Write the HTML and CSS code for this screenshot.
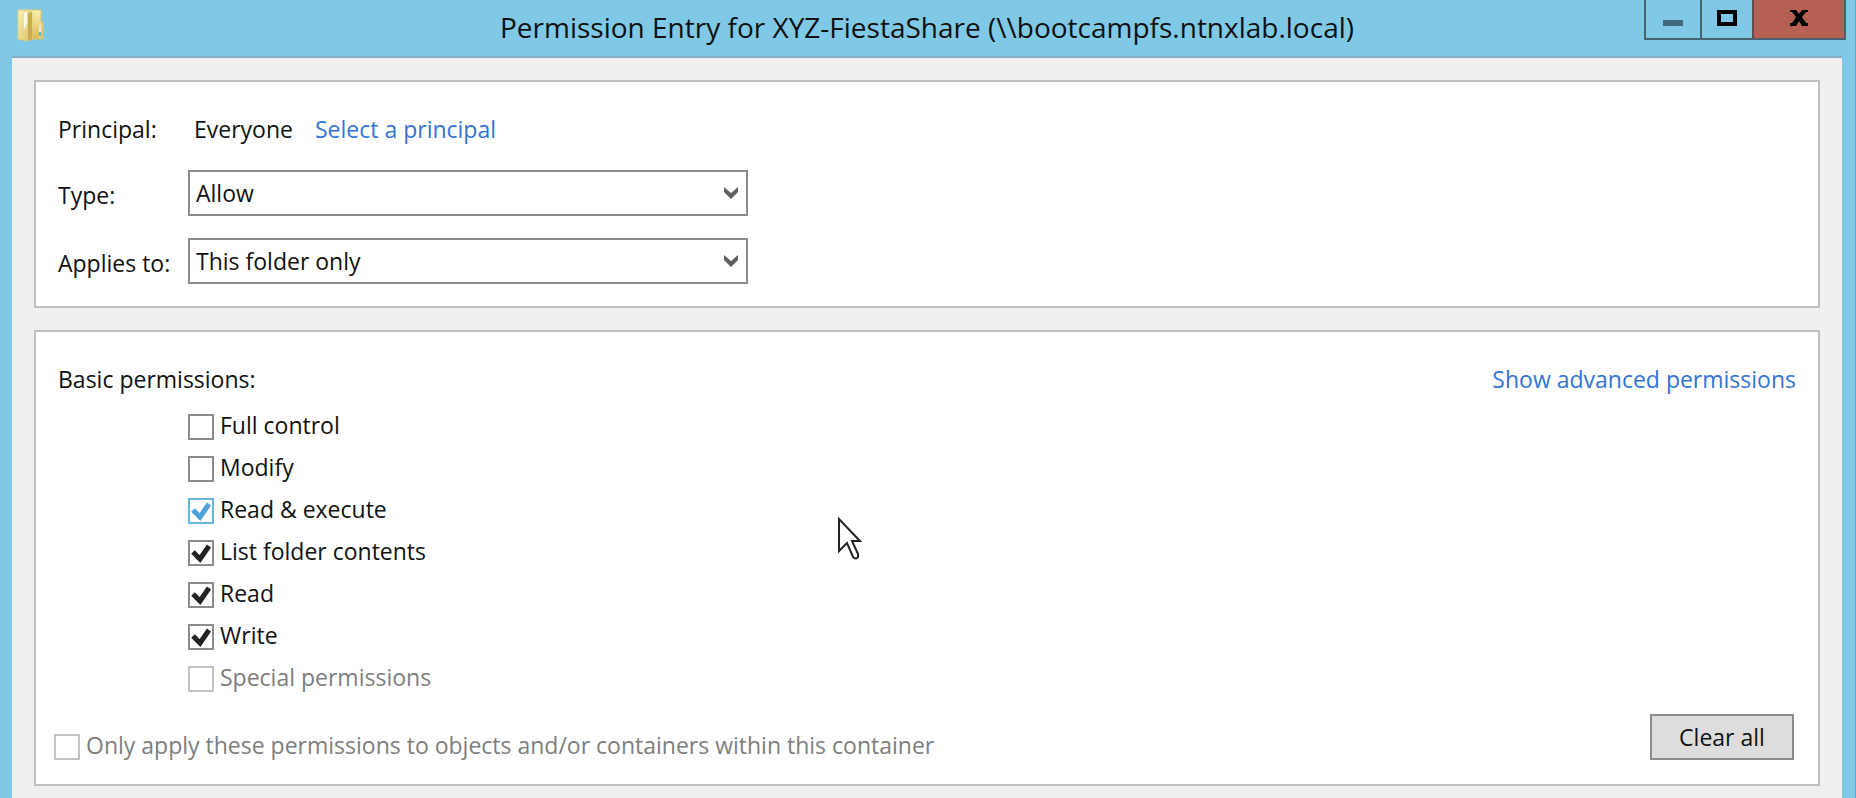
FILE: index.html
```html
<!DOCTYPE html>
<html lang="en">
<head>
<meta charset="utf-8">
<title>Permission Entry for XYZ-FiestaShare</title>
<link rel="stylesheet" href="styles.css">
</head>
<body>
<div class="window">
  <header class="titlebar">
    <svg class="folder" width="28" height="34" viewBox="0 0 28 34" aria-hidden="true">
      <defs>
        <linearGradient id="front" x1="0" y1="0" x2="1" y2="1"><stop offset="0" stop-color="#f9f1b4"/><stop offset="1" stop-color="#dcc266"/></linearGradient>
        <linearGradient id="back" x1="0" y1="0" x2="0" y2="1"><stop offset="0" stop-color="#faf0b0"/><stop offset="1" stop-color="#d9b951"/></linearGradient>
      </defs>
      <path d="M9 1h15v12l2 1v16H9z" fill="url(#back)" stroke="#dcc670"/>
      <path d="M1 1h9l5 2v27l-4 2-10-2z" fill="url(#front)" stroke="#e3d07e"/>
      <path d="M11 4l4-1v27l-4 2z" fill="#c9ab50"/>
      <path d="M7 4l3-1v11l-3 7z" fill="#fffbe6"/>
      <path d="M22 18q1-4 2 0v10h-2z" fill="#e9e9dc"/>
      <path d="M22 23h2v4h-2z" fill="#62b3c8"/>
    </svg>
    <h1 class="title">Permission Entry for XYZ-FiestaShare (\\bootcampfs.ntnxlab.local)</h1>
    <div class="controls">
      <button class="control minimize" type="button" aria-label="Minimize"><svg width="20" height="16" viewBox="0 0 20 16"><path d="M0 10h20v6H0z" fill="#40687a"/></svg></button>
      <button class="control maximize" type="button" aria-label="Maximize"><svg width="20" height="16" viewBox="0 0 20 16"><path d="M2 2h16v12H2z" fill="none" stroke="#000" stroke-width="4"/></svg></button>
      <button class="control close" type="button" aria-label="Close"><svg width="18" height="16" viewBox="0 0 18 16"><path d="M0 0h6l3 4 3-4h6v2h-2l-4 5 4 6h2v3h-6l-3-5-3 5H0v-3h2l4-6-4-5H0z"/></svg></button>
    </div>
  </header>
  <main class="content">
    <section class="panel principal-panel">
      <span>Principal:</span>
      <div class="principal"><span>Everyone</span><a href="#">Select a principal</a></div>
      <label class="field-label" for="type">Type:</label>
      <div class="picker">
        <select id="type"><option>Allow</option><option>Deny</option></select>
        <svg class="chevron" width="16" height="13" viewBox="0 0 16 13"><path d="M1 1l7 6 7-6v5l-7 7-7-7z" fill="#606060"/></svg>
      </div>
      <label class="field-label" for="applies">Applies to:</label>
      <div class="picker">
        <select id="applies"><option>This folder only</option><option>This folder, subfolders and files</option></select>
        <svg class="chevron" width="16" height="13" viewBox="0 0 16 13"><path d="M1 1l7 6 7-6v5l-7 7-7-7z" fill="#606060"/></svg>
      </div>
    </section>
    <section class="panel permissions-panel">
      <div class="heading"><span>Basic permissions:</span><a href="#">Show advanced permissions</a></div>
      <div class="permissions">
        <label class="check"><input type="checkbox"><span>Full control</span></label>
        <label class="check"><input type="checkbox"><span>Modify</span></label>
        <label class="check hot"><input type="checkbox" checked><span>Read &amp; execute</span></label>
        <label class="check"><input type="checkbox" checked><span>List folder contents</span></label>
        <label class="check"><input type="checkbox" checked><span>Read</span></label>
        <label class="check"><input type="checkbox" checked><span>Write</span></label>
        <label class="check disabled"><input type="checkbox" disabled><span>Special permissions</span></label>
      </div>
      <div class="footer">
        <label class="check disabled"><input type="checkbox" disabled><span>Only apply these permissions to objects and/or containers within this container</span></label>
        <button class="clear" type="button">Clear all</button>
      </div>
    </section>
  </main>
  <svg class="pointer" width="26" height="44" viewBox="0 0 26 44" aria-hidden="true"><path d="M2 2v32l8-8 6 14q3 3 5 0v-3l-6-13h8z" fill="#fff" stroke="#222" stroke-width="2"/></svg>
</div>
</body>
</html>
```
FILE: styles.css
```css
* { box-sizing: border-box; }

body {
  margin: 0;
  background: #7fc9e6;
  color: #111;
  font: 23px/30px "Open Sans", "Noto Sans", sans-serif;
}

.window {
  position: relative;
  display: flex;
  flex-direction: column;
  min-height: 100vh;
  padding: 0 13px 0 12px;
  border-right: 1px solid #62a9c7;
}

.titlebar {
  display: grid;
  grid-template-columns: 1fr auto 1fr;
  height: 58px;
  border-bottom: 2px solid #87aec8;
}

.folder { margin: 9px 0 0 5px; }

.title {
  margin: 7px 0 0;
  font-size: 28px;
  font-weight: 400;
  line-height: 40px;
}

.controls {
  display: flex;
  justify-self: end;
  height: 40px;
  margin-right: -4px;
  border: 2px solid #466373;
  border-top: 0;
}

.control {
  display: grid;
  place-items: center;
  padding: 0 0 2px;
  border: 0;
  background: transparent;
}

.minimize { width: 56px; border-right: 2px solid #466373; }
.maximize { width: 52px; border-right: 2px solid #6b4a4d; }
.close { width: 90px; background: #b56053; }

.content {
  display: flex;
  flex: 1;
  flex-direction: column;
  gap: 22px;
  padding: 22px;
  background: #efefef;
}

.panel {
  border: 2px solid #c0c0c0;
  background: #fff;
}

a { color: #3474d4; text-decoration: none; }

.principal-panel {
  display: grid;
  grid-template-columns: 130px minmax(0, 560px);
  grid-template-rows: 38px auto auto;
  row-gap: 22px;
  align-items: center;
  padding: 28px 22px 22px;
}

.principal {
  display: flex;
  gap: 22px;
  padding-left: 6px;
}

.field-label { padding-top: 4px; }

.picker { position: relative; }

select {
  display: block;
  width: 100%;
  height: 46px;
  padding: 0 40px 0 6px;
  border: 2px solid #8c8c8c;
  border-radius: 0;
  background: #fff;
  color: inherit;
  font: inherit;
  appearance: none;
}

.chevron {
  position: absolute;
  top: 16px;
  right: 9px;
  pointer-events: none;
}

.permissions-panel { padding: 32px 22px 24px 18px; }

.heading {
  display: flex;
  justify-content: space-between;
  padding-left: 4px;
}

.permissions {
  display: flex;
  flex-direction: column;
  align-items: flex-start;
  gap: 12px;
  padding: 16px 0 0 134px;
}

.check {
  display: flex;
  align-items: flex-end;
  gap: 6px;
}

.check span { line-height: 30px; }

.check input {
  width: 26px;
  height: 26px;
  margin: 0;
  border: 2px solid #8c8c8c;
  background: #fff center / 22px 22px no-repeat;
  appearance: none;
}

.check input:checked {
  background-image: url("data:image/svg+xml,%3Csvg xmlns='http://www.w3.org/2000/svg' viewBox='0 0 22 22'%3E%3Cpath d='M3 10l7 7 9-13' fill='none' stroke='%23222' stroke-width='5'/%3E%3C/svg%3E");
}

.hot input { border-color: #68b4de; }

.hot input:checked {
  background-image: url("data:image/svg+xml,%3Csvg xmlns='http://www.w3.org/2000/svg' viewBox='0 0 22 22'%3E%3Cpath d='M3 10l7 7 9-13' fill='none' stroke='%234aa3da' stroke-width='5'/%3E%3C/svg%3E");
}

.disabled { color: #7e7e7e; }
.disabled input { border-color: #c0c4c7; }

.footer {
  display: flex;
  align-items: center;
  justify-content: space-between;
  padding-top: 22px;
}

.clear {
  width: 144px;
  height: 46px;
  margin-right: 2px;
  padding: 0;
  border: 2px solid #8c8c8c;
  background: #ddd;
  color: inherit;
  font: inherit;
}

.footer .check { align-self: flex-end; }

.pointer {
  position: absolute;
  top: 517px;
  left: 837px;
}
```
